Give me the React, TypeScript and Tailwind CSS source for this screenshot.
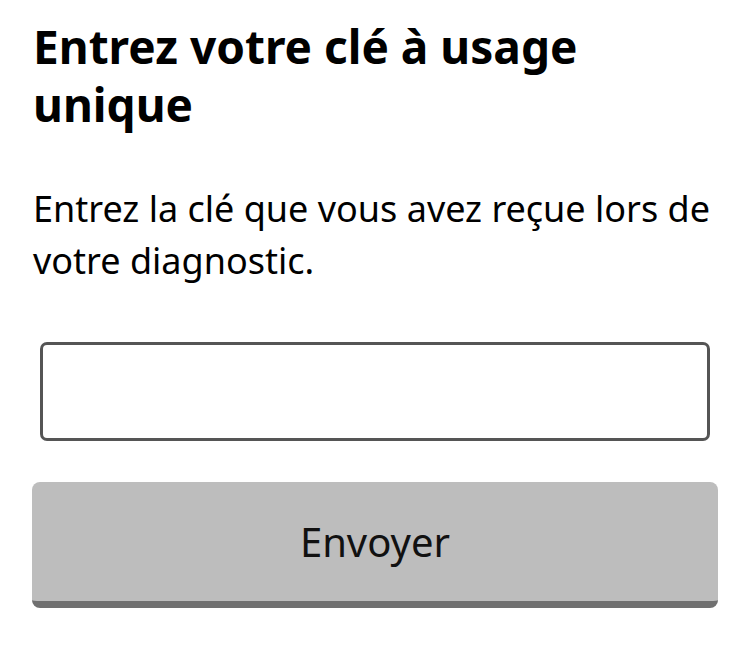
export default function App() {
  return (
    <div className="min-h-[655px] bg-white px-[32px] pt-[17px] text-black" style={{ fontFamily: '"Noto Sans", "Open Sans", sans-serif' }}>
      <h1 className="pl-px text-[46px] font-bold leading-[58px]">Entrez votre clé à usage unique</h1>
      <p className="mt-[50px] pl-px text-[36px] leading-[52px]">
        Entrez la clé que vous avez reçue lors de votre diagnostic.
      </p>
      <div className="mt-[55px] px-[8px]">
        <input
          type="text"
          aria-label="Clé à usage unique"
          className="block h-[99px] w-full rounded-[7px] border-[3px] border-[#555555] bg-white px-4 text-[36px] outline-none"
        />
      </div>
      <button
        type="button"
        className="mt-[41px] flex h-[126px] w-full items-center justify-center rounded-[8px] border-b-[7px] border-[#707070] bg-[#bdbdbd] text-[40px] text-[#111]"
      >
        Envoyer
      </button>
    </div>
  );
}
